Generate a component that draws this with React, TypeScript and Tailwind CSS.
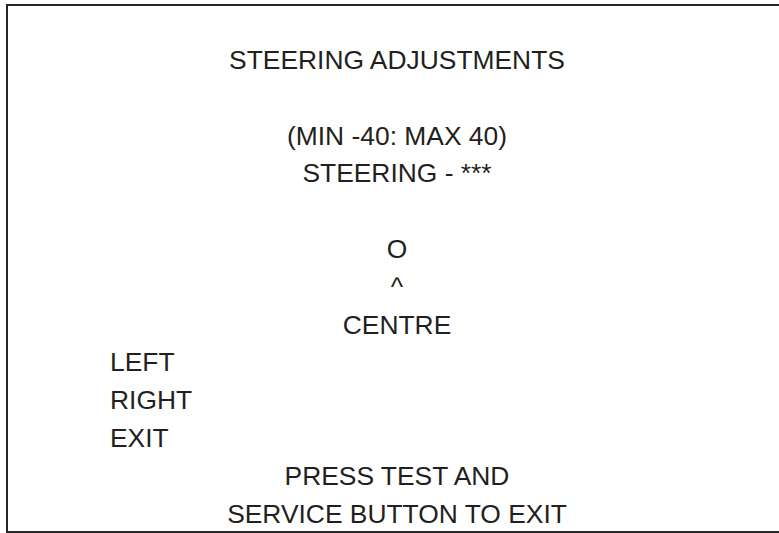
const lines: { text: string; align: "center" | "left" }[] = [
  { text: "STEERING ADJUSTMENTS", align: "center" },
  { text: "", align: "center" },
  { text: "(MIN -40: MAX 40)", align: "center" },
  { text: "STEERING - ***", align: "center" },
  { text: "", align: "center" },
  { text: "O", align: "center" },
  { text: "^", align: "center" },
  { text: "CENTRE", align: "center" },
  { text: "LEFT", align: "left" },
  { text: "RIGHT", align: "left" },
  { text: "EXIT", align: "left" },
  { text: "PRESS TEST AND", align: "center" },
  { text: "SERVICE BUTTON TO EXIT", align: "center" },
];

export default function App() {
  return (
    <div className="h-[533px] w-[779px] overflow-hidden bg-white font-['Liberation_Sans',Arial,sans-serif] text-[26.4px] text-[#231f20]">
      <div className="ml-[6px] mt-[4px] h-[529px] w-[800px] border-b-2 border-l-2 border-t-2 border-[#262626]">
        <div className="flex w-[778px] flex-col pt-[36px]">
          {lines.map((line, i) => (
            <div
              key={i}
              className={
                line.align === "left"
                  ? "h-[37.8px] whitespace-pre pl-[102px] leading-[37.8px]"
                  : "h-[37.8px] whitespace-pre text-center leading-[37.8px]"
              }
            >
              {line.text}
            </div>
          ))}
        </div>
      </div>
    </div>
  );
}
